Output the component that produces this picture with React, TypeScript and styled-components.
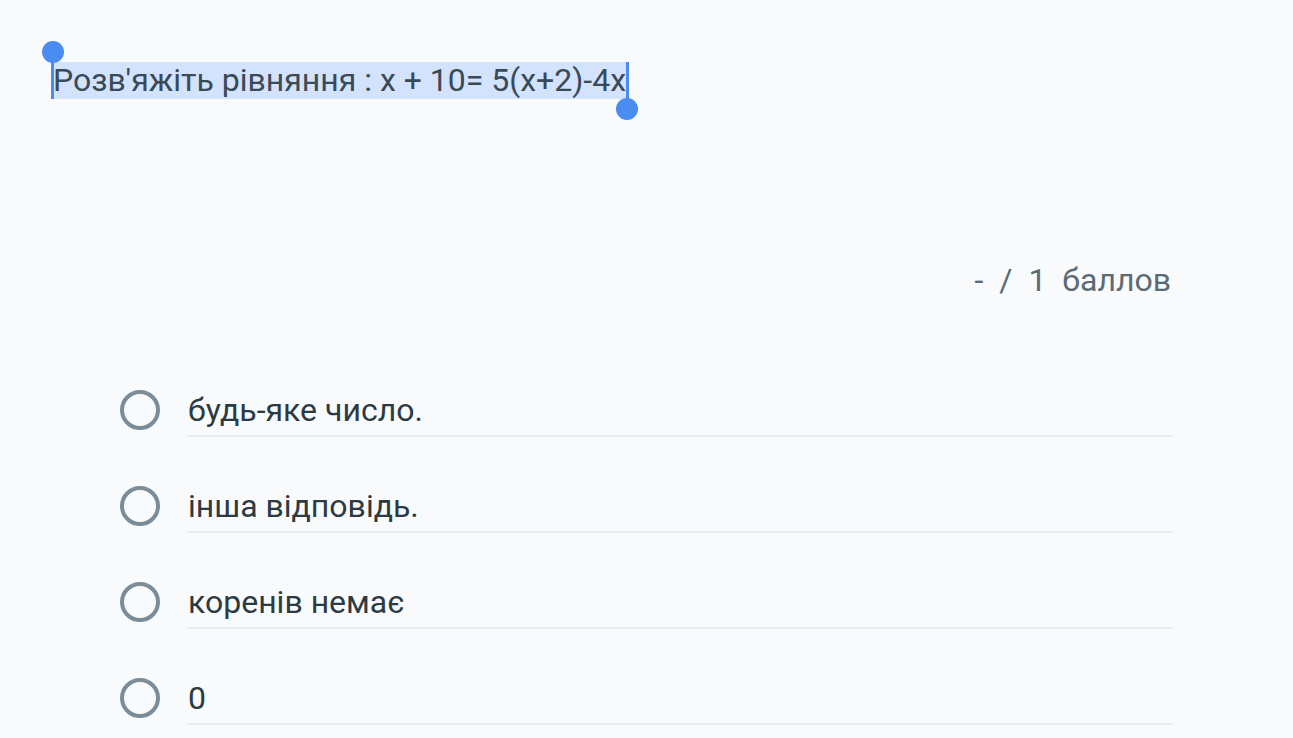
import React from "react";
import styled, { createGlobalStyle } from "styled-components";

const Global = createGlobalStyle`
  html, body { margin: 0; padding: 0; background: #f8fafc; }
  body { font-family: Roboto, "Noto Sans", sans-serif; }
`;

const Page = styled.div`
  width: 1293px;
  height: 738px;
  overflow: hidden;
  background: #f8fafc;
  display: flex;
  flex-direction: column;
`;

const TitleRow = styled.div`
  padding: 62px 0 0 53px;
  display: flex;
`;

const Title = styled.span`
  position: relative;
  font-size: 32px;
  line-height: 37px;
  color: #3a4a57;
  background: #d3e3fd;
`;

const Caret = styled.span<{ $side: "start" | "end" }>`
  position: absolute;
  width: 3px;
  background: #4a8cf0;
  ${(p) => (p.$side === "start" ? "left: -2px; top: -2px; bottom: 0;" : "right: -3px; top: 0; bottom: -6px;")}
`;

const Handle = styled.span<{ $side: "start" | "end" }>`
  position: absolute;
  width: 22px;
  height: 22px;
  border-radius: 50%;
  background: #4a8cf0;
  ${(p) => (p.$side === "start" ? "left: -11px; top: -21px;" : "right: -12px; bottom: -21px;")}
`;

const ScoreRow = styled.div`
  display: flex;
  justify-content: flex-end;
  padding: 161px 122px 0 0;
`;

const Score = styled.span`
  font-size: 32px;
  line-height: 40px;
  color: #5b6b76;
  word-spacing: 8px;
`;

const Options = styled.div`
  display: flex;
  flex-direction: column;
  padding: 62px 121px 0 120px;
`;

const Option = styled.label`
  display: flex;
  align-items: center;
  height: 96px;
  gap: 28px;
`;

const Radio = styled.span`
  box-sizing: border-box;
  width: 40px;
  height: 40px;
  border-radius: 50%;
  border: 4px solid #7a8d98;
  flex: none;
`;

const OptionText = styled.span`
  flex: 1;
  font-size: 32px;
  line-height: 50px;
  color: #2c3a42;
  border-bottom: 2px solid #e9ecef;
  margin-top: 2px;
`;

const options = ["будь-яке число.", "інша відповідь.", "коренів немає", "0"];

export default function App() {
  return (
    <Page>
      <Global />
      <TitleRow>
        <Title>
          <Caret $side="start" />
          <Handle $side="start" />
          Розв'яжіть рівняння : x + 10= 5(x+2)-4x
          <Caret $side="end" />
          <Handle $side="end" />
        </Title>
      </TitleRow>
      <ScoreRow>
        <Score>- / 1 баллов</Score>
      </ScoreRow>
      <Options>
        {options.map((o) => (
          <Option key={o}>
            <Radio />
            <OptionText>{o}</OptionText>
          </Option>
        ))}
      </Options>
    </Page>
  );
}
